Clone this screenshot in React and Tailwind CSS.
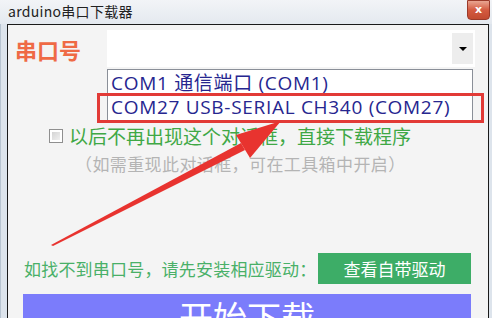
export default function App() {
  const cjk = { fontFamily: '"Noto Sans CJK SC", "Noto Sans", sans-serif' };
  const latin = { fontFamily: '"Open Sans", "Noto Sans CJK SC", sans-serif' };
  return (
    <div className="w-[492px] h-[330px] bg-white" style={cjk}>
      <div className="relative w-[492px] h-[318px] overflow-hidden bg-[#dde4ec]">
        {/* title bar */}
        <div className="h-[24px] flex items-center justify-between bg-gradient-to-b from-[#f2f4f7] to-[#e4e9ef]">
          <span className="pl-[8px] text-[14px] leading-[20px] tracking-[0.3px] text-[#222] -mt-[3px]">arduino串口下载器</span>
          <div className="self-start w-[23px] h-[20px] mr-[2px] rounded-b-[4px] border border-[#9b3a2a] bg-gradient-to-b from-[#e8a592] via-[#d45a40] to-[#c24a30] flex items-center justify-center">
            <span className="text-white text-[11px] font-bold leading-none -mt-[1px]" style={{ fontFamily: '"DejaVu Sans", sans-serif' }}>x</span>
          </div>
        </div>

        {/* body */}
        <div className="flex h-[294px]">
          <div className="w-[7px] border-l border-[#b8c4d1]" />
          <div className="relative flex-1 bg-[#f4f4f4] border-l border-t border-r border-[#1a1a1a] flex flex-col">
            {/* row 1 */}
            <div className="flex items-center pt-[5px]">
              <div className="w-[99px] pl-[7px] text-[22px] leading-[30px] font-bold text-[#ef6a45]">串口号</div>
              <div className="w-[368px] h-[37px] bg-white flex items-center justify-end pr-[2px]">
                <div className="w-[21px] h-[31px] bg-[#ededed] flex items-center justify-center">
                  <div className="w-0 h-0 border-l-[4px] border-r-[4px] border-t-[4px] border-l-transparent border-r-transparent border-t-black" />
                </div>
              </div>
            </div>

            {/* checkbox row */}
            <div className="flex items-center mt-[58px] pl-[41px]">
              <div className="w-[14px] h-[14px] border border-[#8f8f8f] bg-white p-[2px]">
                <div className="w-full h-full bg-gradient-to-br from-[#d4d4d4] to-[#f0f0f0]" />
              </div>
              <span className="ml-[6px] text-[19px] leading-[22px] text-[#3fa845]">以后不再出现这个对话框，直接下载程序</span>
            </div>

            {/* hint */}
            <div className="mt-[7px] pl-[67px] text-[17px] leading-[20px] tracking-[0.4px] text-[#b4b4b4]">（如需重现此对话框，可在工具箱中开启）</div>

            {/* driver row */}
            <div className="flex items-center mt-[79px] pl-[16px] pr-[17px]">
              <span className="text-[17px] leading-[22px] tracking-[0.2px] text-[#49b068]">如找不到串口号，请先安装相应驱动：</span>
              <button className="ml-auto w-[153px] h-[31px] bg-[#3dad67] text-white text-[17px] leading-[22px]">查看自带驱动</button>
            </div>

            {/* start */}
            <div className="mt-[10px] ml-[15px] w-[448px] h-[50px] bg-[#7b7cfb] flex justify-center pt-[1px]">
              <span className="text-white text-[34px] leading-[44px]">开始下载</span>
            </div>

            {/* open dropdown list */}
            <div className="absolute left-[99px] top-[44px] w-[366px] h-[52px] bg-white border border-[#8a8f98] text-[19px] leading-[24px] tracking-[0.7px] text-[#26268f]" style={latin}>
              <div className="pl-[3px] pt-[1px]">COM1 通信端口 (COM1)</div>
              <div className="pl-[3px]">COM27 USB-SERIAL CH340 (COM27)</div>
            </div>

            {/* annotation box */}
            <div className="absolute left-[89px] top-[68px] w-[387px] h-[30px] border-[3px] border-[#e23a36]" />
          </div>
          <div className="w-[3px]" />
        </div>

        {/* annotation arrow */}
        <svg className="absolute left-0 top-0 pointer-events-none" width="492" height="318" viewBox="0 0 492 318">
          <polygon points="51,245 241,143 245,150 53,246" fill="#e8332f" />
          <polygon points="281,121 236,135 250,158" fill="#e8332f" />
        </svg>
      </div>
    </div>
  );
}
